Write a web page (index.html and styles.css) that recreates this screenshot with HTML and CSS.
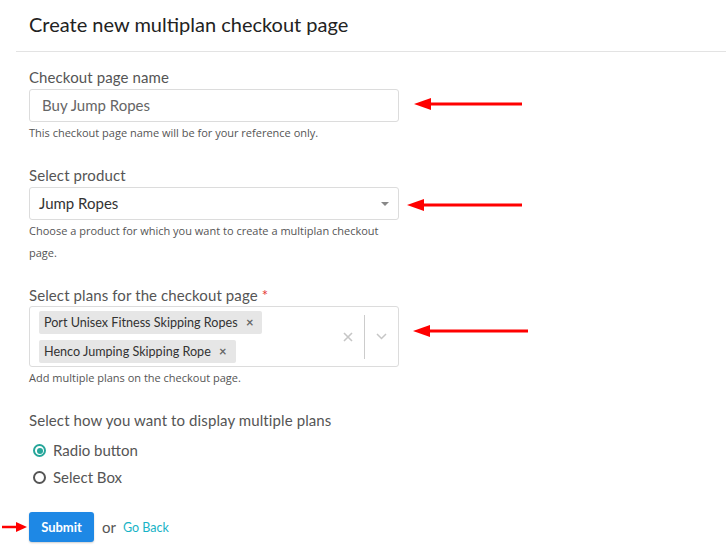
FILE: index.html
```html
<!DOCTYPE html>
<html>
<head>
<meta charset="utf-8">
<link rel="stylesheet" href="styles.css">
</head>
<body>
<div class="page">
  <div class="header"><h1 class="title">Create new multiplan checkout page</h1></div>
  <form class="form">
    <div class="group">
      <label class="label">Checkout page name</label>
      <div class="input">Buy Jump Ropes</div>
      <p class="help">This checkout page name will be for your reference only.</p>
    </div>
    <div class="group">
      <label class="label">Select product</label>
      <div class="input select"><span class="value">Jump Ropes</span><span class="caret"></span></div>
      <p class="help">Choose a product for which you want to create a multiplan checkout page.</p>
    </div>
    <div class="group g3">
      <label class="label">Select plans for the checkout page <span class="req">*</span></label>
      <div class="multi">
        <div class="tags">
          <span class="tag">Port Unisex Fitness Skipping Ropes <span class="tag-x">×</span></span>
          <span class="tag">Henco Jumping Skipping Rope <span class="tag-x">×</span></span>
        </div>
        <div class="indicators">
          <span class="clear"><svg width="10" height="10" viewBox="0 0 10 10"><path d="M1 1L9 9M9 1L1 9" stroke="#c6c6c6" stroke-width="1.6"/></svg></span>
          <span class="sep"></span>
          <span class="chev"><svg width="11" height="7" viewBox="0 0 11 7"><path d="M1 1l4.5 4.5L10 1" fill="none" stroke="#c6c6c6" stroke-width="1.5"/></svg></span>
        </div>
      </div>
      <p class="help">Add multiple plans on the checkout page.</p>
    </div>
    <div class="group">
      <label class="label">Select how you want to display multiple plans</label>
      <div class="radios">
        <div class="radio"><span class="dot on"></span>Radio button</div>
        <div class="radio"><span class="dot"></span>Select Box</div>
      </div>
    </div>
    <div class="actions">
      <button type="button" class="submit">Submit</button>
      <span class="or">or</span>
      <a class="back">Go Back</a>
    </div>
  </form>
</div>
<svg class="arrow a1" width="120" height="16" viewBox="0 0 120 16"><path d="M18 8H110" stroke="#f00" stroke-width="3"/><path d="M2 8L19 2V14Z" fill="#f00"/></svg>
<svg class="arrow a2" width="120" height="16" viewBox="0 0 120 16"><path d="M18 8H116" stroke="#f00" stroke-width="3"/><path d="M1 8L18 2V14Z" fill="#f00"/></svg>
<svg class="arrow a3" width="120" height="16" viewBox="0 0 120 16"><path d="M18 8H116" stroke="#f00" stroke-width="3"/><path d="M1 8L18 2V14Z" fill="#f00"/></svg>
<svg class="arrow a4" width="30" height="12" viewBox="0 0 30 12"><path d="M1 6H16" stroke="#f00" stroke-width="2.5"/><path d="M26 6L15 1V11Z" fill="#f00"/></svg>
</body>
</html>
```
FILE: styles.css
```css
* { box-sizing: border-box; }
html, body { margin: 0; padding: 0; background: #fff; }
body { font-family: Lato, "Open Sans", sans-serif; color: #555; width: 726px; height: 556px; overflow: hidden; position: relative; }
.page { margin-left: 16px; }
.header { border-bottom: 1px solid #e3e3e3; height: 52px; padding: 12px 0 0 13px; }
.title { margin: 0; font-size: 20px; font-weight: 400; color: #222; line-height: 24px; }
.form { padding: 15px 0 0 13px; width: 398px; }
.group { margin-bottom: 21px; }
.label { display: block; font-size: 15px; line-height: 20px; color: #555; margin-bottom: 2px; letter-spacing: 0.1px; }
.g3 .label { margin-bottom: 1px; }
.req { color: #e53935; }
.input { height: 33px; border: 1px solid #dcdcdc; border-radius: 3px; padding: 0 12px; font-size: 15px; line-height: 31px; color: #666; width: 370px; }
.select { display: flex; justify-content: space-between; align-items: center; color: #333; padding: 0 9px 0 9px; }
.caret { width: 0; height: 0; border-left: 4px solid transparent; border-right: 4px solid transparent; border-top: 4px solid #888; }
.help { margin: 0; font-family: "Open Sans", sans-serif; font-size: 11px; line-height: 22px; color: #555; width: 370px; }
.multi { width: 370px; height: 61px; border: 1px solid #dcdcdc; border-radius: 3px; display: flex; justify-content: space-between; align-items: center; padding: 4px 0 4px 9px; }
.tags { display: flex; flex-direction: column; align-items: flex-start; gap: 6px; }
.tag { background: #e6e6e6; border-radius: 2px; font-size: 12.6px; line-height: 22px; color: #333; padding: 0 9px 0 5px; }
.tag-x { color: #666; font-size: 13px; margin-left: 5px; font-weight: 700; }
.indicators { display: flex; align-items: center; height: 100%; }
.clear { width: 32px; display: flex; justify-content: center; }
.sep { width: 1px; height: 44px; background: #ccc; }
.chev { width: 33px; display: flex; justify-content: center; }
.radios { padding-top: 5px; }
.radio { display: flex; align-items: center; font-size: 15px; line-height: 27px; color: #555; padding-left: 4px; }
.dot { width: 13px; height: 13px; border: 2px solid #555; border-radius: 50%; margin-right: 7px; position: relative; }
.dot.on { border-color: #26a69a; }
.dot.on::after { content: ""; position: absolute; left: 1.5px; top: 1.5px; width: 6px; height: 6px; border-radius: 50%; background: #26a69a; }
.actions { display: flex; align-items: center; margin-top: 16px; }
.submit { background: #1e88e5; color: #fff; border: none; border-radius: 3px; height: 30px; width: 65px; font-family: Lato, sans-serif; font-size: 13px; font-weight: 700; box-shadow: 0 1px 2px rgba(0,0,0,0.2); padding: 0; }
.or { font-size: 15px; color: #555; margin-left: 8px; }
.back { font-size: 12.5px; color: #17b3c6; margin-left: 7px; }
.arrow { position: absolute; }
.a1 { left: 412px; top: 96px; }
.a2 { left: 406px; top: 197px; }
.a3 { left: 412px; top: 323px; }
.a4 { left: 1px; top: 521px; }
```
